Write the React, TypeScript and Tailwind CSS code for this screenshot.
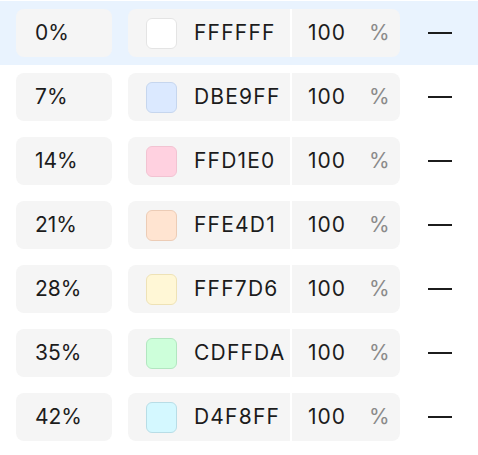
import React from 'react';

const stops = [
  { pos: '0%', hex: 'FFFFFF', border: '#e4e4e4' },
  { pos: '7%', hex: 'DBE9FF', border: '#c6d6ee' },
  { pos: '14%', hex: 'FFD1E0', border: '#f2c3d2' },
  { pos: '21%', hex: 'FFE4D1', border: '#ecccb6' },
  { pos: '28%', hex: 'FFF7D6', border: '#eee2b6' },
  { pos: '35%', hex: 'CDFFDA', border: '#b2e6c0' },
  { pos: '42%', hex: 'D4F8FF', border: '#b8dde6' },
];

const App = () => {
  return (
    <div className="w-[478px] h-[455px] bg-white pt-px font-['Inter',sans-serif] text-[21px] text-[#1c1c1c] overflow-hidden">
      {stops.map((s, i) => (
        <div
          key={s.pos}
          className={`flex items-center h-16 pl-4 ${i === 0 ? 'bg-[#e9f3fe]' : ''}`}
        >
          <div className="w-24 h-12 rounded-lg bg-[#f5f5f5] flex items-center pl-[19px]">
            {s.pos}
          </div>
          <div className="ml-4 w-[272px] h-12 rounded-lg bg-[#f5f5f5] flex items-center overflow-hidden">
            <div className="w-[162px] h-full flex items-center pl-[18px]">
              <div
                className="w-[31px] h-[31px] rounded-[6px] border"
                style={{ backgroundColor: '#' + s.hex, borderColor: s.border }}
              />
              <span className="ml-[17px] tracking-[1.2px]">{s.hex}</span>
            </div>
            <div className="w-[2px] h-full bg-white" />
            <div className="flex-1 h-full flex items-center pl-4">
              <span className="tracking-[1px]">100</span>
              <span className="ml-[23px] text-[#8a8a8a]">%</span>
            </div>
          </div>
          <div className="ml-7 w-6 h-[2px] bg-[#1c1c1c]" />
        </div>
      ))}
    </div>
  );
};

export default App;
